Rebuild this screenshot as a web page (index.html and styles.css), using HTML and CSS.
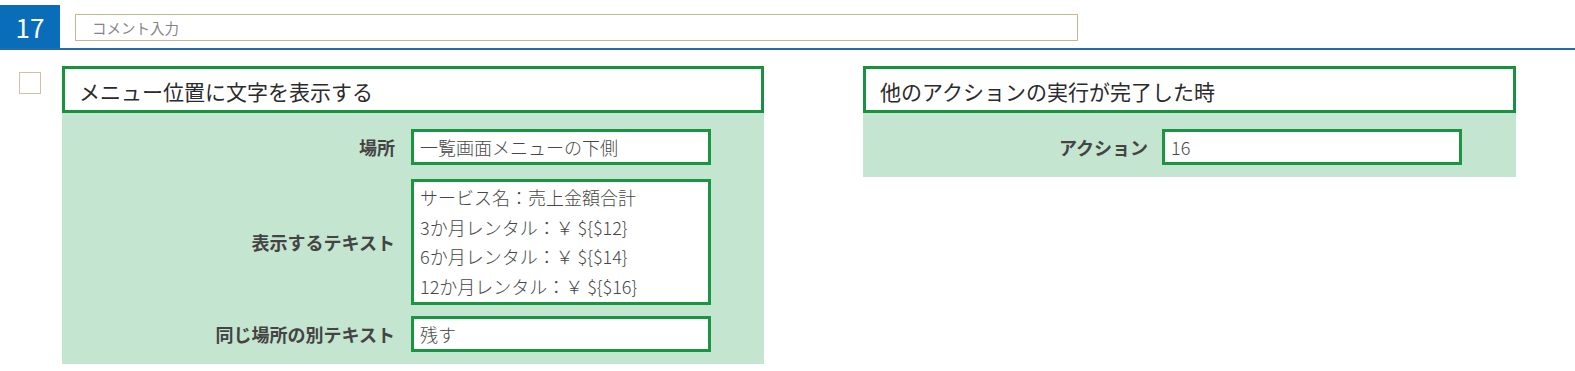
FILE: index.html
```html
<!DOCTYPE html>
<html lang="ja">
<head>
    <meta charset="UTF-8">
    <meta name="viewport" content="width=device-width, initial-scale=1.0">
    <title>Rule 17</title>
    <link rel="stylesheet" href="styles.css">
</head>
<body>
    <div class="topbar">
        <div class="number">17</div>
        <input class="comment" type="text" placeholder="コメント入力">
    </div>

    <div class="rule">
        <div class="check"></div>

        <div class="panel left">
            <div class="title">メニュー位置に文字を表示する</div>
            <div class="body">
                <div class="row">
                    <div class="label">場所</div>
                    <div class="field">一覧画面メニューの下側</div>
                </div>
                <div class="row second">
                    <div class="label">表示するテキスト</div>
                    <div class="field multi">
                        <div>サービス名：売上金額合計</div>
                        <div>3か月レンタル：￥ ${$12}</div>
                        <div>6か月レンタル：￥ ${$14}</div>
                        <div>12か月レンタル：￥ ${$16}</div>
                    </div>
                </div>
                <div class="row">
                    <div class="label">同じ場所の別テキスト</div>
                    <div class="field">残す</div>
                </div>
            </div>
        </div>

        <div class="panel right">
            <div class="title">他のアクションの実行が完了した時</div>
            <div class="body">
                <div class="row">
                    <div class="label">アクション</div>
                    <div class="field">16</div>
                </div>
            </div>
        </div>
    </div>
</body>
</html>
```

FILE: styles.css
```css
*{
    padding: 0px;
    margin: 0px;
    box-sizing: border-box;
}
body{
    background-color: white;
    font-family: "Noto Sans CJK JP", "Noto Sans", sans-serif;
    color: #333;
}
.topbar{
    display: flex;
    align-items: flex-start;
    height: 50px;
    border-bottom: 2px solid #1f6fa6;
}
.topbar .number{
    width: 60px;
    height: 43px;
    margin-top: 5px;
    background-color: #0a6dba;
    color: white;
    font-size: 26px;
    line-height: 44px;
    text-align: center;
}
.topbar .comment{
    width: 1003px;
    height: 27px;
    margin-top: 14px;
    margin-left: 15px;
    border: 1px solid #cbb394;
    padding-left: 16px;
    font-family: inherit;
    font-size: 14.5px;
    color: #888;
    outline: none;
}
.topbar .comment::placeholder{
    color: #858585;
}
.rule{
    display: flex;
    align-items: flex-start;
    padding-left: 19px;
    margin-top: 16px;
}
.check{
    width: 22px;
    height: 22px;
    margin-top: 6px;
    border: 1px solid #d2bfa6;
    background-color: white;
}
.panel{
    display: flex;
    flex-direction: column;
}
.panel.left{
    width: 702px;
    margin-left: 21px;
}
.panel.right{
    width: 653px;
    margin-left: 99px;
}
.panel .title{
    height: 47px;
    flex-shrink: 0;
    border: 3px solid #17923f;
    background-color: white;
    font-size: 21px;
    line-height: 44px;
    padding-left: 14px;
    color: #2b2b2b;
}
.panel .body{
    display: flex;
    flex-direction: column;
    background-color: #c4e5cf;
    padding: 16px 0 12px;
}
.row{
    display: flex;
    align-items: center;
    margin-bottom: 11px;
}
.row:last-child{
    margin-bottom: 0;
}
.row.second{
    margin-top: 3px;
}
.label{
    width: 333px;
    margin-right: 16px;
    text-align: right;
    font-size: 18px;
    font-weight: bold;
    color: #444;
}
.panel.right .label{
    width: 285px;
    margin-right: 14px;
}
.field{
    width: 300px;
    height: 36px;
    border: 3px solid #1a9541;
    background-color: white;
    font-size: 18px;
    font-weight: 300;
    line-height: 30px;
    padding-left: 6px;
    color: #474747;
}
.field.multi{
    height: 126px;
    line-height: 29.5px;
    padding-top: 1px;
}
```
